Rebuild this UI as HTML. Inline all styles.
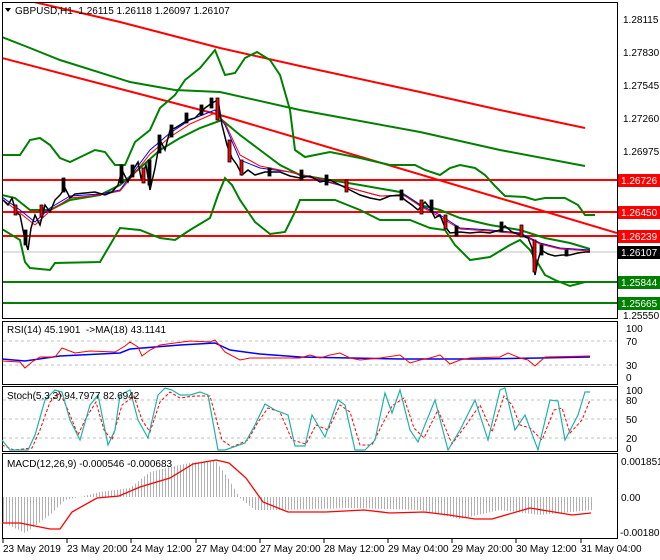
<!DOCTYPE html>
<html><head><meta charset="utf-8"><style>
body{margin:0;background:#fff;width:660px;height:560px;overflow:hidden}
svg{display:block}
text{font-family:"Liberation Sans",sans-serif;font-size:10px;fill:#000}
</style></head><body>
<svg width="660" height="560" viewBox="0 0 660 560" xmlns="http://www.w3.org/2000/svg">
<defs>
<pattern id="hist" width="3" height="10" patternUnits="userSpaceOnUse"><rect x="0" y="0" width="1" height="10" fill="#b0b0b0"/></pattern>
<clipPath id="cmain"><rect x="3" y="3" width="614" height="316"/></clipPath>
</defs>
<rect width="660" height="560" fill="#fff"/>
<rect x="2.5" y="2.5" width="615" height="316" fill="none" stroke="#000"/>
<rect x="2.5" y="321.5" width="615" height="63" fill="none" stroke="#000"/>
<rect x="2.5" y="386.5" width="615" height="65" fill="none" stroke="#000"/>
<rect x="2.5" y="453.5" width="615" height="85" fill="none" stroke="#000"/>

<g clip-path="url(#cmain)" fill="none">
<line x1="3" y1="252" x2="617" y2="252" stroke="#c0c0c0"/>
<polyline points="34,2 120,22 220,48 300,66 420,92 500,110 585,128" stroke="#f00" stroke-width="2"/>
<polyline points="2,58 220,115 617,233" stroke="#f00" stroke-width="2"/>
<polyline points="2,37 30,48 60,60 130,82 175,90 220,92 300,110 420,132 500,150 585,166" stroke="#008000" stroke-width="2"/>
<line x1="3" y1="180" x2="617" y2="180" stroke="#f00" stroke-width="2"/>
<line x1="3" y1="212" x2="617" y2="212" stroke="#f00" stroke-width="2"/>
<line x1="3" y1="236" x2="617" y2="236" stroke="#f00" stroke-width="2"/>
<line x1="3" y1="282" x2="617" y2="282" stroke="#008000" stroke-width="2"/>
<line x1="3" y1="303" x2="617" y2="303" stroke="#008000" stroke-width="2"/>
<polyline points="2,155 20,155 30,140 40,138 50,145 60,158 70,162 95,150 105,152 115,165 125,165 135,142 150,130 160,108 175,95 185,80 200,68 215,50 225,75 235,73 245,58 257,52 270,60 280,75 290,110 295,150 305,157 330,152 360,158 390,165 415,165 425,170 440,175 450,168 460,165 475,168 485,175 495,186 505,196 525,197 535,200 545,198 565,198 578,205 585,215 595,215" stroke="#008000" stroke-width="2"/>
<polyline points="2,229 20,240 25,262 30,268 50,270 55,263 100,262 110,245 120,228 140,230 160,238 175,240 190,230 210,218 218,195 225,178 232,185 240,200 255,222 270,234 285,232 295,212 300,200 335,200 360,210 380,220 410,220 430,228 445,230 455,245 470,260 490,257 510,245 520,240 530,250 545,275 555,280 570,286 585,282" stroke="#008000" stroke-width="2"/>
<polyline points="2,195 15,198 30,210 50,210 70,200 100,195 120,185 140,168 160,150 180,138 200,128 222,120 240,135 260,150 280,165 300,175 330,180 360,185 400,192 420,205 440,210 460,218 490,225 520,230 545,238 570,243 590,249" stroke="#008000" stroke-width="2"/>
<polyline points="2,197 20,210 35,222 50,208 70,196 100,194 120,190 135,170 150,150 170,133 190,120 215,110 225,125 240,160 260,168 290,172 320,180 350,188 380,196 405,195 420,205 440,215 460,228 490,230 520,233 540,243 560,248 590,250" stroke="#00f" stroke-width="1"/>
<polyline points="2,199 20,213 35,225 50,211 70,198 100,195 120,191 135,173 150,154 170,137 190,124 215,113 225,123 240,155 260,166 290,172 320,179 350,188 380,196 405,196 420,206 440,217 460,229 490,231 520,234 540,244 560,249 590,251" stroke="#f00" stroke-width="1"/>
<polyline points="3,200 8,205 12,198 16,212 20,215 25,240 28,250 31,228 35,215 40,225 45,205 50,212 55,200 60,195 65,188 70,198 75,194 85,193 95,192 105,195 112,192 118,185 122,170 128,182 133,170 138,162 141,178 146,165 150,190 155,168 160,140 165,150 170,130 175,128 180,125 188,120 195,118 205,108 212,103 218,100 222,125 227,145 232,158 237,165 242,175 248,170 255,175 265,172 280,172 290,176 300,178 310,176 320,182 330,180 340,185 350,190 360,195 370,198 380,200 390,196 400,195 405,200 412,205 418,210 425,202 430,208 435,218 440,215 444,225 450,233 460,232 470,233 480,232 490,233 500,230 505,226 512,232 520,235 528,238 532,248 535,275 538,260 541,250 548,254 555,256 562,255 570,255 578,253 585,252 590,252" stroke="#000" stroke-width="1.5"/>
<g fill="#000" stroke="#000" stroke-width="0.8">
<rect x="24" y="230" width="3" height="15"/><rect x="62" y="178" width="3" height="14"/><rect x="120" y="165" width="3" height="18"/><rect x="131" y="165" width="3" height="12"/><rect x="148" y="160" width="3" height="25"/><rect x="158" y="135" width="3" height="18"/><rect x="170" y="125" width="3" height="12"/><rect x="185" y="113" width="3" height="10"/><rect x="200" y="105" width="3" height="10"/><rect x="210" y="98" width="3" height="10"/>
<rect x="268" y="168" width="3" height="8"/><rect x="300" y="170" width="3" height="10"/><rect x="325" y="175" width="3" height="10"/><rect x="400" y="190" width="3" height="10"/><rect x="430" y="200" width="3" height="12"/><rect x="455" y="226" width="3" height="10"/><rect x="500" y="222" width="3" height="10"/><rect x="540" y="245" width="3" height="10"/><rect x="565" y="250" width="3" height="6"/>
</g>
<g fill="#f00" stroke="#000" stroke-width="0.8">
<rect x="14" y="205" width="3" height="10"/><rect x="40" y="205" width="3" height="12"/><rect x="142" y="168" width="3" height="15"/><rect x="216" y="98" width="3" height="22"/><rect x="228" y="140" width="3" height="22"/><rect x="240" y="160" width="3" height="15"/><rect x="345" y="180" width="3" height="12"/><rect x="420" y="200" width="3" height="14"/><rect x="444" y="215" width="3" height="14"/><rect x="533" y="240" width="3" height="32"/><rect x="520" y="225" width="3" height="12"/>
</g>
</g>

<path d="M5 8 L11 8 L8 12 Z" fill="#000"/>
<text x="15" y="14">GBPUSD,H1&#160; 1.26115 1.26118 1.26097 1.26107</text>

<g>
<text x="623" y="23">1.28115</text>
<text x="623" y="56">1.27830</text>
<text x="623" y="89">1.27545</text>
<text x="623" y="122">1.27260</text>
<text x="623" y="155">1.26975</text>
<text x="623" y="319">1.25550</text>
<rect x="618" y="174" width="42" height="13" fill="#f00"/><text x="621" y="184" style="fill:#fff">1.26726</text>
<rect x="618" y="206" width="42" height="13" fill="#f00"/><text x="621" y="216" style="fill:#fff">1.26450</text>
<rect x="618" y="230" width="42" height="13" fill="#f00"/><text x="621" y="240" style="fill:#fff">1.26239</text>
<rect x="618" y="246" width="42" height="13" fill="#000"/><text x="621" y="256" style="fill:#fff">1.26107</text>
<rect x="618" y="276" width="42" height="13" fill="#008000"/><text x="621" y="286" style="fill:#fff">1.25844</text>
<rect x="618" y="297" width="42" height="13" fill="#008000"/><text x="621" y="307" style="fill:#fff">1.25665</text>
</g>

<line x1="3" y1="341" x2="617" y2="341" stroke="#c0c0c0" stroke-dasharray="3,3"/>
<line x1="3" y1="365" x2="617" y2="365" stroke="#c0c0c0" stroke-dasharray="3,3"/>
<polyline fill="none" stroke="#00f" stroke-width="1.5" points="2,359 25,361 60,356 120,353 130,349 180,345 215,343 230,350 260,354 300,357 400,359 480,359 540,358 590,357"/>
<polyline fill="none" stroke="#f00" stroke-width="1" points="2,361 20,362 25,368 32,362 40,357 55,357 62,348 75,353 90,351 115,352 125,346 130,342 138,347 142,356 150,350 160,345 175,343 190,341 210,342 215,340 225,352 240,360 250,358 270,358 300,358 310,355 320,358 330,355 340,353 350,358 360,360 380,358 400,355 410,363 420,360 430,358 440,355 450,364 460,360 470,358 500,357 508,353 520,358 528,360 535,366 545,357 590,356"/>
<text x="7" y="333">RSI(14) 45.1901 &#160;-&gt;MA(18) 43.1141</text>
<text x="626" y="332">100</text><text x="626" y="345">70</text><text x="626" y="369">30</text><text x="626" y="381">0</text>

<line x1="3" y1="400" x2="617" y2="400" stroke="#c0c0c0" stroke-dasharray="3,3"/>
<line x1="3" y1="419" x2="617" y2="419" stroke="#c0c0c0" stroke-dasharray="3,3"/>
<line x1="3" y1="438" x2="617" y2="438" stroke="#c0c0c0" stroke-dasharray="3,3"/>
<polyline fill="none" stroke="#f00" stroke-width="1" stroke-dasharray="3,2" points="2,445 14,450 32,448 40,430 50,402 60,393 68,410 78,435 86,418 96,402 104,430 112,440 122,405 134,396 142,420 150,432 160,402 170,392 180,398 195,396 210,396 222,440 232,447 248,440 258,422 268,408 280,412 292,440 306,444 316,425 328,430 340,405 350,412 360,445 372,445 382,425 392,406 404,398 414,428 424,438 438,410 452,444 466,425 480,405 492,432 504,396 512,405 520,425 530,428 542,440 554,410 562,408 570,433 582,420 590,400"/>
<polyline fill="none" stroke="#20b2aa" stroke-width="1.2" points="2,440 10,450 28,450 35,435 45,400 55,390 62,392 70,420 80,440 90,405 98,395 108,445 115,430 120,395 130,390 138,420 148,438 158,395 165,388 172,390 180,395 190,395 200,392 208,395 218,450 225,450 245,443 255,425 265,404 275,410 288,415 295,446 305,446 312,415 325,437 338,400 345,405 355,450 365,450 375,440 385,393 392,413 400,390 410,430 418,442 435,400 448,450 460,430 475,400 488,440 500,390 505,388 515,430 525,415 538,450 550,400 558,401 565,440 578,415 585,392 590,392"/>
<text x="7" y="399">Stoch(5,3,3) 94.7977 82.6942</text>
<text x="626" y="394">100</text><text x="626" y="404">80</text><text x="626" y="423">50</text><text x="626" y="442">20</text><text x="626" y="452">0</text>

<polygon fill="url(#hist)" points="2,497 2,522 25,533 50,515 65,500 80,497 80,497 100,492 130,488 150,472 170,467 190,463 215,460 228,478 240,498 255,510 280,510 350,508 420,510 460,519 500,510 540,515 592,510 592,497"/>
<polyline fill="none" stroke="#f00" stroke-width="1.3" points="2,523 20,523 50,529 60,529 72,512 97,498 119,496 140,487 170,478 193,464 216,460 229,463 246,478 263,502 288,512 326,512 364,510 390,513 424,512 449,515 475,519 492,519 530,508 572,515 591,513"/>
<text x="7" y="467">MACD(12,26,9) -0.000546 -0.000683</text>
<text x="621" y="465">0.001851</text><text x="621" y="501">0.00</text><text x="620" y="536">-0.001802</text>

<g stroke="#000">
<line x1="3" y1="539" x2="3" y2="543"/><line x1="67" y1="539" x2="67" y2="543"/><line x1="131" y1="539" x2="131" y2="543"/><line x1="196" y1="539" x2="196" y2="543"/><line x1="260" y1="539" x2="260" y2="543"/><line x1="324" y1="539" x2="324" y2="543"/><line x1="388" y1="539" x2="388" y2="543"/><line x1="452" y1="539" x2="452" y2="543"/><line x1="516" y1="539" x2="516" y2="543"/><line x1="581" y1="539" x2="581" y2="543"/>
</g>
<text x="3" y="552">23 May 2019</text>
<text x="67" y="552">23 May 20:00</text>
<text x="131" y="552">24 May 12:00</text>
<text x="196" y="552">27 May 04:00</text>
<text x="260" y="552">27 May 20:00</text>
<text x="324" y="552">28 May 12:00</text>
<text x="388" y="552">29 May 04:00</text>
<text x="452" y="552">29 May 20:00</text>
<text x="516" y="552">30 May 12:00</text>
<text x="581" y="552">31 May 04:00</text>
</svg>
</body></html>
